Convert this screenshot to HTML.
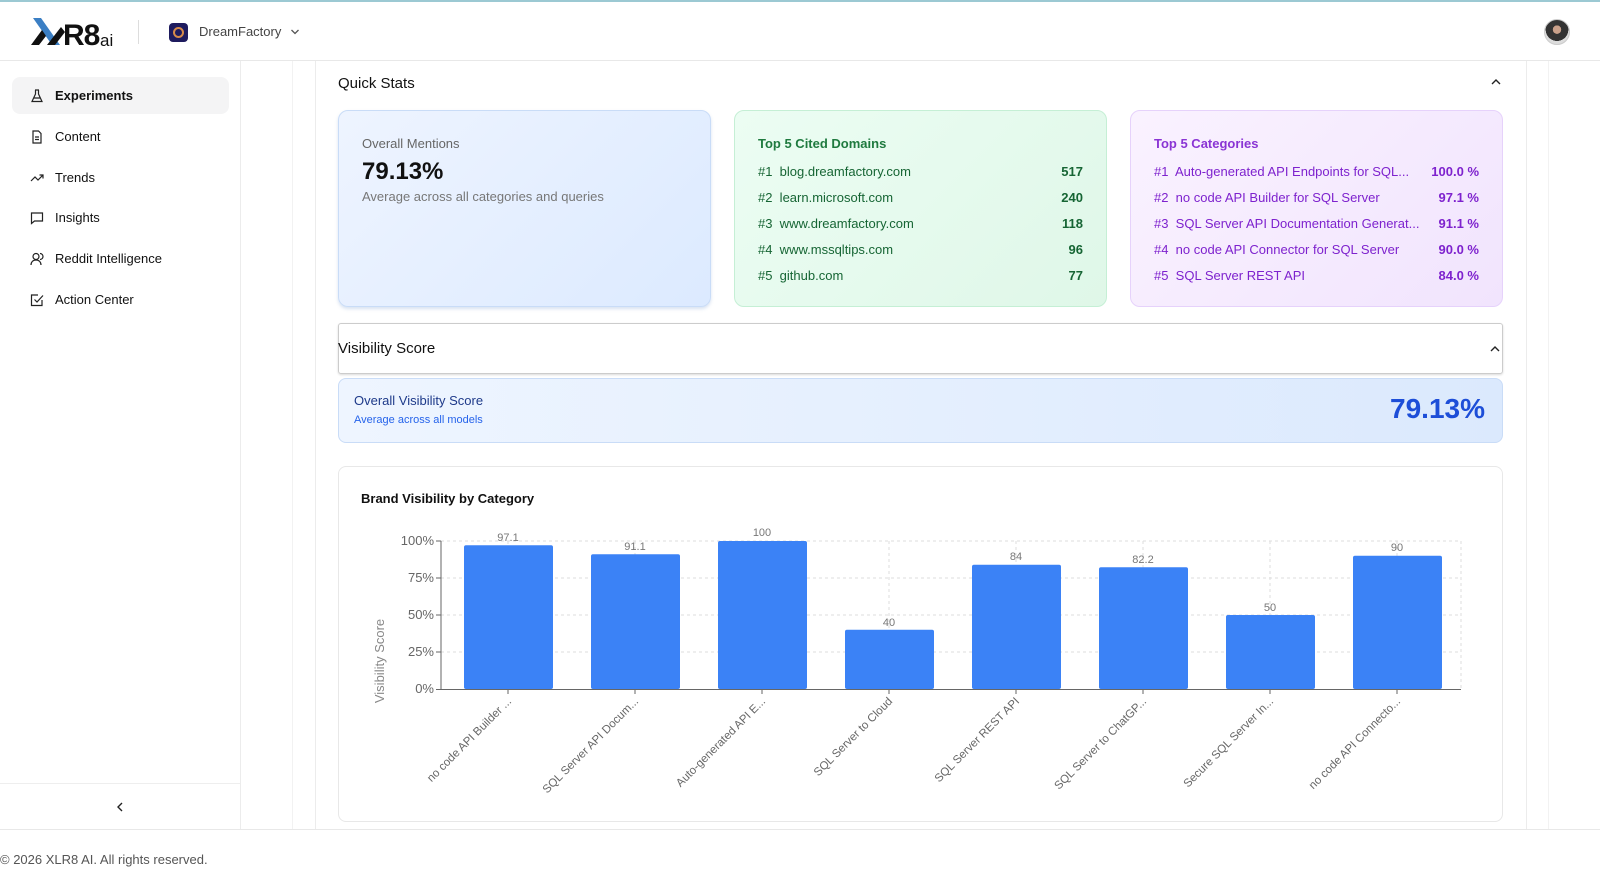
<!DOCTYPE html>
<html><head><meta charset="utf-8">
<style>
*{box-sizing:border-box;margin:0;padding:0}
body{width:1600px;height:889px;overflow:hidden;background:#fff;font-family:"Liberation Sans",sans-serif;color:#111;position:relative}
.abs{position:absolute}
.topline{left:0;top:0;width:1600px;height:2px;background:#9cc9d3}
.hdr{left:0;top:2px;width:1600px;height:59px;border-bottom:1px solid #e8e8e8}
.vl{position:absolute;width:1px;background:#ececec}
.nav{position:absolute;left:12px;width:217px;height:37px;border-radius:8px;display:flex;align-items:center;font-size:13px;color:#111}
.nav svg{position:absolute;left:18px}
.nav span{position:absolute;left:43px}
.card{position:absolute;top:110px;height:197px;width:373px;border-radius:10px;padding:25px 23px}
.row{display:flex;justify-content:space-between;font-size:13px;height:25.8px;align-items:center}
.row b{font-weight:600}
</style></head><body>
<div class="abs topline"></div>
<div class="abs hdr"></div>
<div class="abs" style="left:29px;top:15px;width:90px;height:34px">
<svg width="90" height="34" viewBox="0 0 90 34">
<path d="M4 3 L12 3 L31 30 L23 30 Z" fill="#3b7fc4"/>
<path d="M2 30 L13 15 L17 21 L10 30 Z" fill="#111"/>
<path d="M18 30 L32 12 L36 17 L26 30 Z" fill="#111"/>
<text x="34" y="30" font-family="Liberation Sans" font-weight="700" font-size="30" fill="#111" letter-spacing="-1">R8</text>
<text x="71" y="31" font-family="Liberation Sans" font-size="17" fill="#111">ai</text>
</svg></div>
<div class="vl" style="left:138px;top:20px;height:24px;background:#ddd"></div>
<div class="abs" style="left:169px;top:23px;width:19px;height:19px;border-radius:4px;background:#1e1b5e"><div style="position:absolute;left:4px;top:4px;width:11px;height:11px;border-radius:50%;border:2px solid #d68a4a"></div></div>
<div class="abs" style="left:199px;top:24px;font-size:13px;color:#444">DreamFactory</div>
<svg class="abs" style="left:290px;top:28px" width="10" height="8"><path d="M1.5 2 L5 5.5 L8.5 2" stroke="#555" stroke-width="1.3" fill="none"/></svg>
<div class="abs" style="left:1544px;top:19px;width:26px;height:26px;border-radius:50%;background:radial-gradient(circle at 50% 40%,#c9a08a 0 22%,#333 23% 60%,#ddd 61%);border:1px solid #ccc"></div>

<div class="vl" style="left:240px;top:61px;height:768px"></div>
<div class="vl" style="left:292px;top:61px;height:768px;background:#f2f2f2"></div>
<div class="vl" style="left:315px;top:61px;height:768px"></div>
<div class="vl" style="left:1526px;top:61px;height:768px"></div>
<div class="vl" style="left:1548px;top:61px;height:768px;background:#f2f2f2"></div>
<div class="abs" style="left:0;top:829px;width:1600px;height:1px;background:#e8e8e8"></div>
<div class="abs" style="left:0;top:783px;width:240px;height:1px;background:#eee"></div>

<div class="nav" style="top:77px;background:#f4f4f5"><svg width="14" height="14" viewBox="0 0 14 14" fill="none" stroke="#222" stroke-width="1.2"><path d="M5 1h4M5.5 1v4L2 12.5h10L8.5 5V1M3.5 9h7"/></svg><span style="font-weight:600">Experiments</span></div>
<div class="nav" style="top:118px"><svg width="14" height="14" viewBox="0 0 14 14" fill="none" stroke="#222" stroke-width="1.2"><path d="M3 1h5.5L11 3.5V13H3zM5 7h4M5 9.5h4"/></svg><span>Content</span></div>
<div class="nav" style="top:159px"><svg width="14" height="14" viewBox="0 0 14 14" fill="none" stroke="#222" stroke-width="1.2"><path d="M1 10l4-4 3 3 5-5M9.5 4H13v3.5"/></svg><span>Trends</span></div>
<div class="nav" style="top:199px"><svg width="14" height="14" viewBox="0 0 14 14" fill="none" stroke="#222" stroke-width="1.2"><path d="M1.5 2h11v8h-8l-3 2.5z"/></svg><span>Insights</span></div>
<div class="nav" style="top:240px"><svg width="14" height="14" viewBox="0 0 14 14" fill="none" stroke="#222" stroke-width="1.2"><circle cx="6" cy="4.5" r="3"/><path d="M1 13c0-3 2-5 5-5s5 2 5 5M10 1.5a3 3 0 010 6"/></svg><span>Reddit Intelligence</span></div>
<div class="nav" style="top:281px"><svg width="14" height="14" viewBox="0 0 14 14" fill="none" stroke="#222" stroke-width="1.2"><path d="M12 7v5.5H1.5V2H8M4.5 6.5l2.5 2.5 6-6.5"/></svg><span>Action Center</span></div>
<svg class="abs" style="left:115px;top:801px" width="10" height="12"><path d="M7 2L3 6l4 4" stroke="#222" stroke-width="1.4" fill="none"/></svg>
<div class="abs" style="left:0;top:852px;font-size:13px;color:#555">© 2026 XLR8 AI. All rights reserved.</div>

<div class="abs" style="left:338px;top:75px;font-size:15px;color:#111">Quick Stats</div>
<svg class="abs" style="left:1490px;top:78px" width="12" height="8"><path d="M2 6L6 2l4 4" stroke="#222" stroke-width="1.4" fill="none"/></svg>

<div class="card" style="left:338px;background:linear-gradient(135deg,#eef4ff,#dceaff);border:1px solid #c9dcf7;box-shadow:0 2px 3px rgba(100,140,200,.25)">
 <div style="font-size:13px;color:#666">Overall Mentions</div>
 <div style="font-size:24px;font-weight:700;color:#111;margin-top:7px">79.13%</div>
 <div style="font-size:13px;color:#777;margin-top:3px">Average across all categories and queries</div>
</div>
<div class="card" style="left:734px;background:linear-gradient(135deg,#ecfdf3,#dff7e8);border:1px solid #c5efd5;color:#166534">
 <div style="font-size:13px;font-weight:600;margin-bottom:8px;color:#1f7a3f">Top 5 Cited Domains</div>
 <div class="row"><span>#1&nbsp; blog.dreamfactory.com</span><b>517</b></div>
 <div class="row"><span>#2&nbsp; learn.microsoft.com</span><b>240</b></div>
 <div class="row"><span>#3&nbsp; www.dreamfactory.com</span><b>118</b></div>
 <div class="row"><span>#4&nbsp; www.mssqltips.com</span><b>96</b></div>
 <div class="row"><span>#5&nbsp; github.com</span><b>77</b></div>
</div>
<div class="card" style="left:1130px;background:linear-gradient(135deg,#faf2ff,#f1e4fd);border:1px solid #e6d2fb;color:#7e22ce">
 <div style="font-size:13px;font-weight:600;margin-bottom:8px;color:#8a34d4">Top 5 Categories</div>
 <div class="row"><span>#1&nbsp; Auto-generated API Endpoints for SQL...</span><b>100.0 %</b></div>
 <div class="row"><span>#2&nbsp; no code API Builder for SQL Server</span><b>97.1 %</b></div>
 <div class="row"><span>#3&nbsp; SQL Server API Documentation Generat...</span><b>91.1 %</b></div>
 <div class="row"><span>#4&nbsp; no code API Connector for SQL Server</span><b>90.0 %</b></div>
 <div class="row"><span>#5&nbsp; SQL Server REST API</span><b>84.0 %</b></div>
</div>

<div class="abs" style="left:338px;top:323px;width:1165px;height:51px;border:1px solid #ccc;border-radius:3px;box-shadow:0 1px 2px rgba(0,0,0,.15)"></div>
<div class="abs" style="left:338px;top:340px;font-size:15px;color:#111">Visibility Score</div>
<svg class="abs" style="left:1489px;top:345px" width="12" height="8"><path d="M2 6L6 2l4 4" stroke="#222" stroke-width="1.4" fill="none"/></svg>
<div class="abs" style="left:338px;top:378px;width:1165px;height:65px;border-radius:8px;background:linear-gradient(90deg,#eef5ff,#dbe9fd);border:1px solid #c9dcf7"></div>
<div class="abs" style="left:354px;top:393px;font-size:13px;color:#1e3a8a">Overall Visibility Score</div>
<div class="abs" style="left:354px;top:414px;font-size:11px;color:#2563eb">Average across all models</div>
<div class="abs" style="right:115px;top:393px;font-size:28px;font-weight:700;color:#1d4ed8">79.13%</div>

<div class="abs" style="left:338px;top:466px;width:1165px;height:356px;border:1px solid #e8e8e8;border-radius:8px"></div>
<div class="abs" style="left:361px;top:491px;font-size:13px;font-weight:600;color:#111">Brand Visibility by Category</div>
<svg class="abs" style="left:0;top:0" width="1600" height="889" font-family="Liberation Sans">
<g stroke="#ddd" stroke-dasharray="3 3" stroke-width="1">
<line x1="441" y1="541" x2="1461" y2="541"/><line x1="441" y1="578" x2="1461" y2="578"/><line x1="441" y1="615" x2="1461" y2="615"/><line x1="441" y1="652" x2="1461" y2="652"/>
<line x1="508" y1="541" x2="508" y2="689"/><line x1="635" y1="541" x2="635" y2="689"/><line x1="762" y1="541" x2="762" y2="689"/><line x1="889" y1="541" x2="889" y2="689"/><line x1="1016" y1="541" x2="1016" y2="689"/><line x1="1143" y1="541" x2="1143" y2="689"/><line x1="1270" y1="541" x2="1270" y2="689"/><line x1="1397" y1="541" x2="1397" y2="689"/><line x1="1461" y1="541" x2="1461" y2="689"/>
</g>
<g fill="#3b82f6">
<rect x="464" y="545.3" width="89" height="143.7" rx="2"/>
<rect x="591" y="554.2" width="89" height="134.8" rx="2"/>
<rect x="718" y="541" width="89" height="148" rx="2"/>
<rect x="845" y="629.8" width="89" height="59.2" rx="2"/>
<rect x="972" y="564.7" width="89" height="124.3" rx="2"/>
<rect x="1099" y="567.3" width="89" height="121.7" rx="2"/>
<rect x="1226" y="615" width="89" height="74" rx="2"/>
<rect x="1353" y="555.8" width="89" height="133.2" rx="2"/>
</g>
<g stroke="#666" stroke-width="1"><line x1="441" y1="541" x2="441" y2="689"/><line x1="436" y1="689.5" x2="1461" y2="689.5"/>
<line x1="436" y1="541" x2="441" y2="541"/><line x1="436" y1="578" x2="441" y2="578"/><line x1="436" y1="615" x2="441" y2="615"/><line x1="436" y1="652" x2="441" y2="652"/>
<line x1="508" y1="689" x2="508" y2="694"/><line x1="635" y1="689" x2="635" y2="694"/><line x1="762" y1="689" x2="762" y2="694"/><line x1="889" y1="689" x2="889" y2="694"/><line x1="1016" y1="689" x2="1016" y2="694"/><line x1="1143" y1="689" x2="1143" y2="694"/><line x1="1270" y1="689" x2="1270" y2="694"/><line x1="1397" y1="689" x2="1397" y2="694"/></g>
<g font-size="13" fill="#666" text-anchor="end">
<text x="434" y="545">100%</text><text x="434" y="582">75%</text><text x="434" y="619">50%</text><text x="434" y="656">25%</text><text x="434" y="693">0%</text></g>
<g font-size="11" fill="#777" text-anchor="middle">
<text x="508" y="541">97.1</text><text x="635" y="550">91.1</text><text x="762" y="536">100</text><text x="889" y="626">40</text><text x="1016" y="560">84</text><text x="1143" y="563">82.2</text><text x="1270" y="611">50</text><text x="1397" y="551">90</text></g>
<text transform="translate(384,661) rotate(-90)" font-size="13" fill="#888" text-anchor="middle">Visibility Score</text>
<g font-size="11.5" fill="#666" text-anchor="end">
<text transform="translate(512,702) rotate(-45)">no code API Builder ...</text>
<text transform="translate(639,702) rotate(-45)">SQL Server API Docum...</text>
<text transform="translate(766,702) rotate(-45)">Auto-generated API E...</text>
<text transform="translate(893,702) rotate(-45)">SQL Server to Cloud</text>
<text transform="translate(1020,702) rotate(-45)">SQL Server REST API</text>
<text transform="translate(1147,702) rotate(-45)">SQL Server to ChatGP...</text>
<text transform="translate(1274,702) rotate(-45)">Secure SQL Server In...</text>
<text transform="translate(1401,702) rotate(-45)">no code API Connecto...</text>
</g>
</svg>
</body></html>
